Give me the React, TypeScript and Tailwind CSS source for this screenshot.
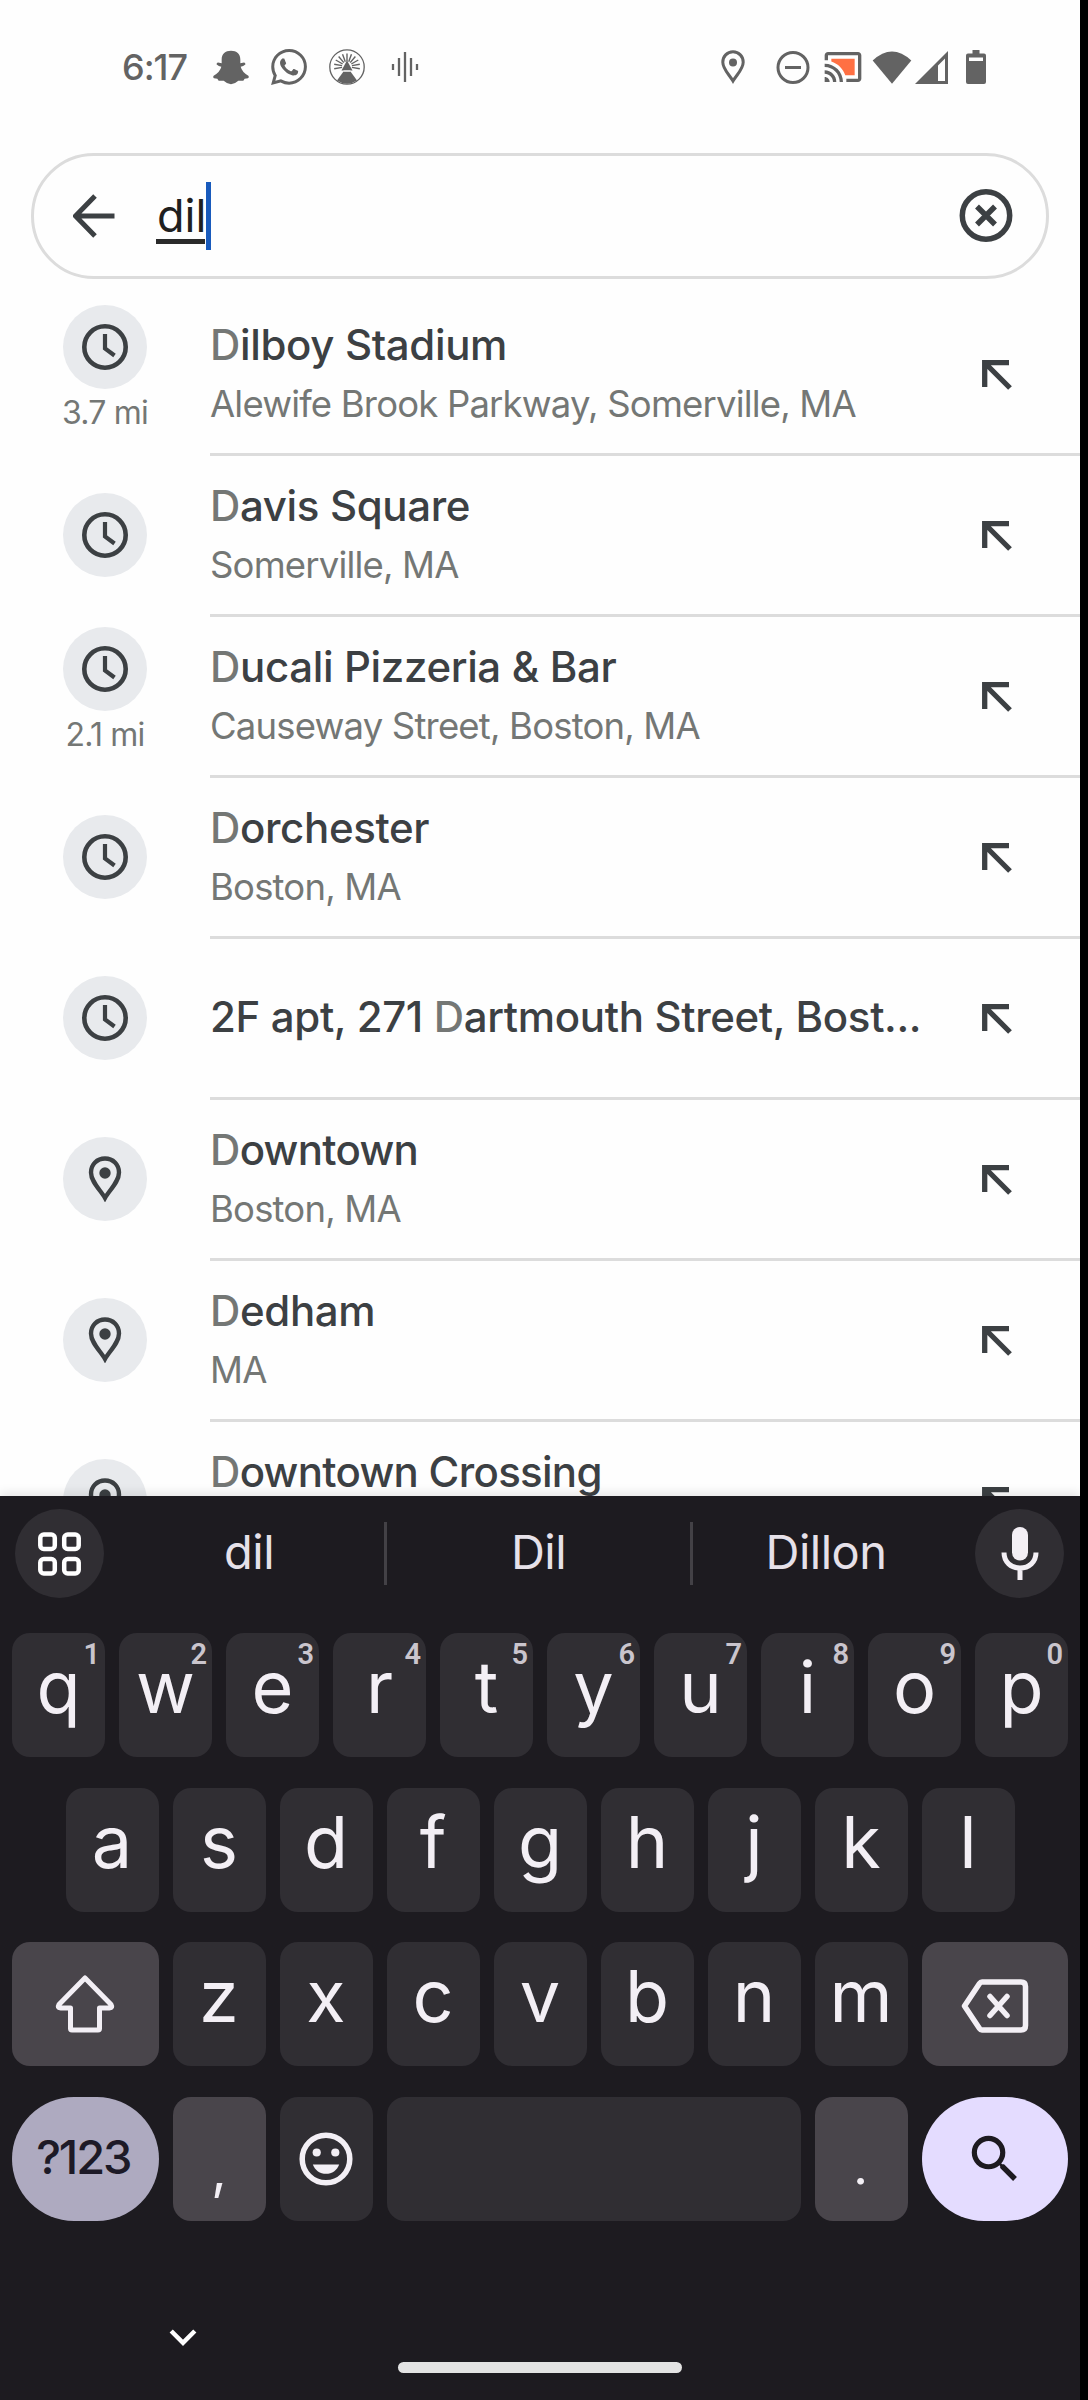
import type { ReactNode } from "react";
import { MdSearch } from "react-icons/md";
import { SiWhatsapp } from "react-icons/si";

type Place = {
  before?: string;
  match: string;
  rest: string;
  detail?: string;
  distance?: string;
  kind: "recent" | "place";
  tight?: boolean;
};

const places: Place[] = [
  { match: "D", rest: "ilboy Stadium", detail: "Alewife Brook Parkway, Somerville, MA", distance: "3.7 mi", kind: "recent" },
  { match: "D", rest: "avis Square", detail: "Somerville, MA", kind: "recent" },
  { match: "D", rest: "ucali Pizzeria & Bar", detail: "Causeway Street, Boston, MA", distance: "2.1 mi", kind: "recent" },
  { match: "D", rest: "orchester", detail: "Boston, MA", kind: "recent" },
  { before: "2F apt, 271 ", match: "D", rest: "artmouth Street, Bost...", kind: "recent" },
  { match: "D", rest: "owntown", detail: "Boston, MA", kind: "place", tight: true },
  { match: "D", rest: "edham", detail: "MA", kind: "place" },
  { match: "D", rest: "owntown Crossing", detail: "\u00a0", kind: "place", tight: true },
];

const rays = [-100, -80, -60, -40, -20, 0, 20, 40, 60, 80, 100];

function StatusBar() {
  return (
    <div className="flex h-[134px] shrink-0 items-center pl-[122px] text-[#636363]">
      <span className="w-[68px] text-[36px] font-medium leading-[40px] tracking-[-1px]">6:17</span>
      <svg className="ml-[23px] h-[35px] w-[36px]" viewBox="339 64 108 104" fill="currentColor">
        <path d="M393 66C376 66 365 76 365 92V103L354 101Q349 102 350 107Q356 112 364 114Q360 130 341 141Q338 145 342 148L352 150L356 156L371 156Q380 165 393 166Q406 165 415 156L430 156L434 150L444 148Q448 145 445 141Q426 130 422 114Q430 112 436 107Q437 102 432 101L421 103V92C421 76 410 66 393 66Z" />
      </svg>
      <SiWhatsapp className="ml-[22px] h-9 w-9" />
      <svg className="ml-[22px] h-9 w-9" viewBox="0 0 36 36" fill="none" stroke="currentColor">
        <circle cx="18" cy="18" r="17.2" strokeWidth="1.3" />
        {rays.map((a) => (
          <path key={a} d="M18 12.500V4.500" strokeWidth="1.4" transform={`rotate(${a} 18 17.5)`} />
        ))}
        <path d="M18 11.500l5.500 10h-11z" fill="currentColor" stroke="none" />
        <path d="M14.500 22.500h7l6.500 9q-10 6.500-20 0z" fill="currentColor" stroke="none" />
        <path d="M14.500 22h7" stroke="#fefefe" strokeWidth="1" />
      </svg>
      <svg className="ml-[26px] h-[30px] w-7" viewBox="0 0 28 30" stroke="currentColor" strokeWidth="2.300">
        <path d="M2 12v6M8 6v18M14 0v30M20 6v18M26 12v6" />
      </svg>

      <svg className="ml-[302px] h-[34px] w-6" viewBox="0 0 24 34" fill="none" stroke="currentColor">
        <path d="M12 1.800C6 1.800 1.800 6.500 1.800 12.200C1.800 19 8.500 25 12 31C15.500 25 22.200 19 22.200 12.200C22.200 6.500 18 1.800 12 1.800Z" strokeWidth="3" />
        <circle cx="12" cy="12.500" r="4" fill="currentColor" stroke="none" />
      </svg>
      <svg className="ml-[31px] h-[34px] w-[34px]" viewBox="0 0 34 34" fill="none" stroke="currentColor" strokeWidth="3">
        <circle cx="17" cy="17.500" r="15" />
        <path d="M9 17.500h16" />
      </svg>
      <svg className="ml-[13px] h-10 w-10" viewBox="0 0 24 24" fill="currentColor">
        <path fill="#ff7043" d="M19 7H5v1.630c3.960 1.280 7.090 4.410 8.370 8.370H19V7z" />
        <path d="M1 18v3h3c0-1.660-1.340-3-3-3zm0-4v2c2.760 0 5 2.240 5 5h2c0-3.870-3.130-7-7-7zm0-4v2c4.970 0 9 4.030 9 9h2c0-6.080-4.930-11-11-11zm20-7H3c-1.100 0-2 .900-2 2v3h2V5h18v14h-7v2h7c1.100 0 2-.900 2-2V5c0-1.100-.900-2-2-2z" />
      </svg>
      <svg className="ml-[9px] h-[33px] w-10" viewBox="0 0 40 33" fill="currentColor">
        <path d="M.700 9.500Q20-8.500 39.300 9.500L20 32.700Z" />
      </svg>
      <svg className="ml-[3px] h-[33px] w-[33px]" viewBox="0 0 33 33" fill="currentColor" fillRule="evenodd">
        <path d="M0 33L33 0V33ZM23 14.500V30H30V7.500Z" />
      </svg>
      <svg className="ml-[18px] h-[34px] w-5" viewBox="0 0 20 34" fill="currentColor" fillRule="evenodd">
        <path d="M6.500 0h7v3.500H18q2 0 2 2V32q0 2-2 2H2q-2 0-2-2V5.500q0-2 2-2H6.500ZM3 7.500V11h14V7.500Z" />
      </svg>
    </div>
  );
}

function SearchField() {
  return (
    <div className="mx-[31px] mt-[19px] flex h-[126px] shrink-0 items-center rounded-full border-[3px] border-[#dcdcdc] pl-[39px] pr-[33px]">
      <svg className="h-[44px] w-[42px]" viewBox="0 0 42 44" fill="none" stroke="#3c4043" strokeWidth="5">
        <path d="M22 2L2.500 22L22 42M3 22H41.500" />
      </svg>
      <div className="ml-[42px] flex h-[68px] items-center">
        <span className="relative text-[45px] leading-[60px] text-[#1f1f1f]">
          dil
          <span className="absolute -left-px bottom-[2px] h-[5px] w-full bg-[#2a2a2a]" />
        </span>
        <span className="h-[68px] w-[5px] bg-[#185abc]" />
      </div>
      <svg className="ml-auto h-[54px] w-[54px]" viewBox="0 0 54 54" fill="none" stroke="#3c4043" strokeWidth="5.500">
        <circle cx="27" cy="26.500" r="23.700" />
        <path d="M18 17.500l18 18M36 17.500l-18 18" />
      </svg>
    </div>
  );
}

function PlaceIcon({ kind }: { kind: Place["kind"] }) {
  return (
    <span className="flex h-[84px] w-[84px] shrink-0 items-center justify-center rounded-full bg-[#e8eaed]">
      {kind === "recent" ? (
        <svg className="h-[46px] w-[46px]" viewBox="0 0 46 46" fill="none" stroke="#3c4043">
          <circle cx="23" cy="23" r="20.700" strokeWidth="4.600" />
          <path d="M23 10v14.500l9.500 7" strokeWidth="4.200" />
        </svg>
      ) : (
        <svg className="h-[46px] w-[34px]" viewBox="0 0 34 46" fill="none" stroke="#3c4043">
          <path d="M17 2.500C9 2.500 3 8.500 3 16.500C3 26 12.500 34 17 42C21.500 34 31 26 31 16.500C31 8.500 25 2.500 17 2.500Z" strokeWidth="4.400" />
          <circle cx="17" cy="17" r="5.700" fill="#3c4043" stroke="none" />
        </svg>
      )}
    </span>
  );
}

function PlaceRow({ place }: { place: Place }) {
  return (
    <li className="flex h-[161px] shrink-0">
      <div className={place.distance ? "flex w-[210px] flex-col items-center pt-[10px]" : "flex w-[210px] flex-col items-center pt-[37px]"}>
        <PlaceIcon kind={place.kind} />
        {place.distance && (
          <span className="text-[32px] leading-[47px] tracking-[-0.800px] text-[#747775]">{place.distance}</span>
        )}
      </div>
      <div className="flex flex-1 items-center border-b-[3px] border-[#dcdcdc]">
        <div className={place.detail ? "flex-1 whitespace-nowrap pt-px" : "flex-1 whitespace-nowrap pb-[3px]"}>
          <p
            className={
              place.tight
                ? "text-[42px] font-medium leading-[59px] tracking-[-0.700px] text-[#3c4043]"
                : "text-[42px] font-medium leading-[59px] tracking-[-0.350px] text-[#3c4043]"
            }
          >
            {place.before}
            <span className="text-[#747775]">{place.match}</span>
            {place.rest}
          </p>
          {place.detail && (
            <p className="text-[36.500px] leading-[60px] tracking-[-0.820px] text-[#747775]">{place.detail}</p>
          )}
        </div>
        <svg className="mr-[68px] mt-[2px] h-[30px] w-[30px]" viewBox="0 0 30 30" fill="none" stroke="#3c4043" strokeWidth="5.300">
          <path d="M27 2.700H2.700V27M3 3L28 28" />
        </svg>
      </div>
    </li>
  );
}

function LetterKey({ letter, hint }: { letter: string; hint?: string }) {
  return (
    <div className="relative h-full w-[93px] shrink-0 rounded-[18px] bg-[#302e33] text-center text-[72px] leading-[108px] text-[#f3eff5]">
      {letter}
      {hint && (
        <span className="absolute right-[5px] top-0 font-['Roboto',sans-serif] text-[29px] font-semibold leading-[42px] text-[#cac5cd]">
          {hint}
        </span>
      )}
    </div>
  );
}

function KeyRow({ children }: { children: ReactNode }) {
  return <div className="flex h-[124px] justify-center gap-[14px]">{children}</div>;
}

function Keyboard() {
  return (
    <div className="relative flex h-[904px] shrink-0 flex-col bg-[#1d1b20] shadow-[0_-3px_10px_rgba(0,0,0,0.1)]">
      <div className="flex h-[115px] items-center pl-[15px] text-[47px] leading-[60px] tracking-[-0.500px] text-[#e6e1e9]">
        <span className="flex h-[89px] w-[89px] items-center justify-center rounded-full bg-[#302e33]">
          <svg className="h-[44px] w-[43px]" viewBox="0 0 43 44" fill="none" stroke="#ffffff" strokeWidth="4.500">
            <rect x="2.300" y="2.500" width="14.500" height="14.500" rx="3.500" />
            <rect x="26.200" y="2.500" width="14.500" height="14.500" rx="3.500" />
            <rect x="2.300" y="27" width="14.500" height="14.500" rx="3.500" />
            <rect x="26.200" y="27" width="14.500" height="14.500" rx="3.500" />
          </svg>
        </span>
        <span className="ml-[10px] w-[270px] pb-[3px] text-center">dil</span>
        <span className="h-[63px] w-[3px] bg-[#434146]" />
        <span className="w-[303px] pb-[3px] text-center">Dil</span>
        <span className="h-[63px] w-[3px] bg-[#434146]" />
        <span className="w-[266px] pb-[3px] text-center">Dillon</span>
        <span className="ml-[16px] flex h-[89px] w-[89px] items-center justify-center rounded-full bg-[#302e33]">
          <svg className="h-[53px] w-[38px]" viewBox="0 0 38 53" fill="none" stroke="#f3eff5">
            <rect x="11" y="0" width="16" height="33.500" rx="8" fill="#f3eff5" stroke="none" />
            <path d="M3 25.500C3 35 10 41 19 41C28 41 35 35 35 25.500M19 41V53" strokeWidth="5" />
          </svg>
        </span>
      </div>

      <div className="mt-[22px] flex flex-col gap-[30.700px]">
        <KeyRow>
          {"qwertyuiop".split("").map((c, i) => (
            <LetterKey key={c} letter={c} hint={String((i + 1) % 10)} />
          ))}
        </KeyRow>
        <KeyRow>
          {"asdfghjkl".split("").map((c) => (
            <LetterKey key={c} letter={c} />
          ))}
        </KeyRow>
        <KeyRow>
          <div className="flex w-[146.500px] items-center justify-center rounded-[18px] bg-[#49454b]">
            <svg className="h-[60px] w-[60px]" viewBox="0 0 60 60" fill="none" stroke="#f3eff5" strokeWidth="5" strokeLinejoin="round">
              <path d="M30 4L56 30.500Q58 34 54.500 34H44.500V54.500Q44.500 56 43 56H17Q15.500 56 15.500 54.500V34H5.500Q2 34 4 30.500Z" />
            </svg>
          </div>
          {"zxcvbnm".split("").map((c) => (
            <LetterKey key={c} letter={c} />
          ))}
          <div className="flex w-[146.500px] items-center justify-center rounded-[18px] bg-[#49454b]">
            <svg className="mt-1 h-[54px] w-[68px]" viewBox="0 0 68 54" fill="none" stroke="#f3eff5" strokeWidth="5.500" strokeLinejoin="round">
              <path d="M21 3H60Q64.500 3 64.500 7.500V46.500Q64.500 51 60 51H21Q19.500 51 18.500 49.500L3.500 27L18.500 4.500Q19.500 3 21 3Z" />
              <path d="M29 17.500L46 36.500M46 17.500L29 36.500" strokeLinecap="round" />
            </svg>
          </div>
        </KeyRow>
        <KeyRow>
          <div className="w-[146.500px] rounded-full bg-[#aeaac0] pr-[4px] text-center text-[47px] font-medium leading-[120px] tracking-[-2.200px] text-[#1d1a27]">
            ?123
          </div>
          <div className="w-[93px] rounded-[18px] bg-[#49454b] text-center text-[54px] leading-[146px] text-[#f3eff5]">,</div>
          <div className="flex w-[93px] items-center justify-center rounded-[18px] bg-[#302e33]">
            <svg className="h-[54px] w-[54px]" viewBox="0 0 54 54" fill="none">
              <circle cx="27" cy="27" r="23.800" stroke="#f3eff5" strokeWidth="5.500" />
              <circle cx="17.700" cy="20.500" r="4.100" fill="#f3eff5" />
              <circle cx="36.300" cy="20.500" r="4.100" fill="#f3eff5" />
              <path d="M13.800 32.500H40.200C38 38.500 33 41.800 27 41.800S16 38.500 13.800 32.500Z" fill="#f3eff5" />
            </svg>
          </div>
          <div className="w-[414px] rounded-[18px] bg-[#302e33]" />
          <div className="w-[93px] rounded-[18px] bg-[#49454b] text-center font-['Roboto',sans-serif] text-[60px] leading-[134px] text-[#f3eff5]">.</div>
          <div className="flex w-[146.500px] items-center justify-center rounded-full bg-[#e4dcff]">
            <MdSearch className="h-[62px] w-[62px] text-[#1d1a20]" />
          </div>
        </KeyRow>
      </div>

      <svg className="ml-[169px] mt-[108px] h-[18px] w-[28px]" viewBox="0 0 28 18" fill="none" stroke="#ffffff" strokeWidth="4.500">
        <path d="M2.200 2L14 13.800L25.800 2" />
      </svg>
      <div className="mx-auto mt-[15px] h-[11px] w-[284px] rounded-full bg-[#e3e3e3]" />
    </div>
  );
}

export default function App() {
  return (
    <div className="h-[2400px] w-[1088px] bg-black font-['Inter',sans-serif]">
      <main className="flex h-full w-[1080px] flex-col overflow-hidden bg-[#fefefe]">
        <StatusBar />
        <SearchField />
        <ul className="mt-[16px] h-[1201px] shrink-0 overflow-hidden">
          {places.map((p) => (
            <PlaceRow key={p.rest} place={p} />
          ))}
        </ul>
        <Keyboard />
      </main>
    </div>
  );
}
